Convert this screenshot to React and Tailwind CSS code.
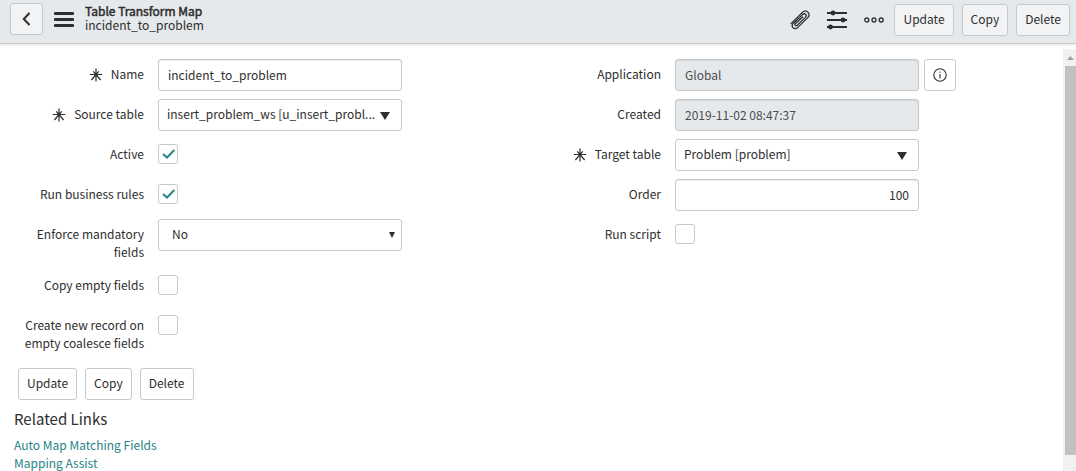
import { useState } from 'react'

const buttonBase = 'h-8 rounded-[3px] border border-[#c6c9cc] px-2 pb-0.5 text-[12px] leading-[18px] hover:bg-gray-100'
const fieldBase = 'block h-8 w-full rounded-[3px] border border-[#c6c9cc] px-[9px] pb-0.5 text-[12px] leading-[18px] outline-none focus:border-[#278485]'

function RecordActions({ className }) {
  return (
    <>
      <button type="button" className={`${buttonBase} ${className}`}>Update</button>
      <button type="button" className={`${buttonBase} ${className}`}>Copy</button>
      <button type="button" className={`${buttonBase} ${className}`}>Delete</button>
    </>
  )
}

function PaperclipIcon() {
  return (
    <svg className="h-5 w-5" viewBox="0 0 20 20" fill="none" stroke="currentColor" strokeWidth="1.3" strokeLinecap="round" strokeLinejoin="round">
      <path d="M1 13.6 L12.4 2.4 C14.4 0.6 16.6 0.7 18 2.2 C19.6 3.8 19.4 6 17.8 7.6 L7.8 17.4 C6 19 4 18.9 2.9 17.6 C1.8 16.3 2 14.6 3.4 13.2 L12.6 4.6 C13.8 3.6 15 3.6 15.8 4.4 C16.6 5.3 16.4 6.4 15.4 7.4 L7.2 15.2 C6.4 15.9 5.6 15.8 5.2 15.3 C4.8 14.8 4.9 14.1 5.5 13.5 L12.6 7" />
    </svg>
  )
}

function SettingsIcon() {
  return (
    <svg className="h-5 w-5" viewBox="0 0 20 20" fill="currentColor">
      <rect x="0" y="2" width="20" height="2" />
      <rect x="0" y="9" width="20" height="2" />
      <rect x="0" y="16" width="20" height="2" />
      <circle cx="6" cy="3" r="2.4" />
      <circle cx="16" cy="10" r="2.4" />
      <circle cx="3.5" cy="17" r="2.4" />
    </svg>
  )
}

function RequiredIcon() {
  return (
    <svg className="mt-[3px] h-3.5 w-3.5 shrink-0" viewBox="0 0 14 14" fill="none" stroke="currentColor" strokeWidth="1.2" aria-label="Mandatory">
      <path d="M7 0.5 V13.5 M0.8 6.5 H13.2 M2.4 12 L7 6.5 L11.6 12 M4.2 3.4 L7 6.5 L9.8 3.4" />
    </svg>
  )
}

// Label, control and an optional trailing action
function FormRow({ id, label, required, action, children }) {
  return (
    <div className="mb-2 grid min-h-8 grid-cols-[158fr_244fr_115fr]">
      <label htmlFor={id} className="flex justify-end gap-2 pt-1.5 pr-3.5 pb-px pl-5 text-right text-[12px] leading-[18px]">
        {required && <RequiredIcon />}
        <span>{label}</span>
      </label>
      <div>{children}</div>
      <div className="pl-[5px]">{action}</div>
    </div>
  )
}

function TextField({ id, value, readOnly, alignRight }) {
  const [text, setText] = useState(value)
  const look = readOnly ? 'bg-[#e6e9eb] text-[#4a4d50]' : 'bg-white'
  return (
    <input
      id={id}
      type="text"
      value={text}
      readOnly={readOnly}
      onChange={(e) => setText(e.target.value)}
      className={`${fieldBase} ${look} shadow-[inset_0_1px_1px_rgba(0,0,0,0.08)] ${alignRight ? 'text-right' : ''}`}
    />
  )
}

function SelectField({ id, options, small }) {
  return (
    <div className="relative">
      <select id={id} className={`${fieldBase} appearance-none bg-white ${small ? 'pl-[13px]' : 'pl-2'}`}>
        {options.map((option) => (
          <option key={option}>{option}</option>
        ))}
      </select>
      {small ? (
        <svg className="pointer-events-none absolute top-[13px] right-[7px] h-1.5 w-1.5" viewBox="0 0 6 6" fill="currentColor">
          <path d="M0 0 H6 L3 6 Z" />
        </svg>
      ) : (
        <svg className="pointer-events-none absolute top-[13px] right-3 h-2 w-2.5" viewBox="0 0 10 8" fill="currentColor">
          <path d="M0 0 H10 L5 8 Z" />
        </svg>
      )}
    </div>
  )
}

function CheckField({ id, defaultChecked = false }) {
  const [checked, setChecked] = useState(defaultChecked)
  return (
    <div className="relative pt-[5px]">
      <input
        id={id}
        type="checkbox"
        checked={checked}
        onChange={(e) => setChecked(e.target.checked)}
        className="block h-5 w-5 appearance-none rounded-[3px] border border-[#c6c9cc] bg-white"
      />
      {checked && (
        <svg className="pointer-events-none absolute top-[5px] left-0 h-5 w-5 text-[#278485]" viewBox="0 0 20 20" fill="none" stroke="currentColor" strokeWidth="2">
          <path d="M5 10 L9 13.5 L16.3 6" />
        </svg>
      )}
    </div>
  )
}

export default function App() {
  return (
    <div className="flex h-screen flex-col overflow-hidden bg-white font-['Noto_Sans_CJK_SC',sans-serif] text-[#2e2e2e]">
      <header className="flex h-11 shrink-0 items-start border-b border-[#c9cccf] bg-[#e6e9eb] pr-1.5 pl-2.5 shadow-[0_1px_2px_rgba(0,0,0,0.12)]">
        <button type="button" aria-label="Back" className="mt-[3px] flex h-8 w-[33px] items-center justify-center rounded-[3px] border border-[#c6c9cc] bg-[#f2f3f5]">
          <svg className="h-3.5 w-3.5" viewBox="0 0 14 14" fill="none" stroke="currentColor" strokeWidth="2">
            <path d="M9.5 1 L3.8 7 L9.5 13" />
          </svg>
        </button>
        <button type="button" aria-label="Additional actions" className="mt-3 ml-[11px]">
          <svg className="h-4 w-5" viewBox="0 0 20 16" fill="currentColor">
            <rect x="0" y="0" width="20" height="3" rx="1" />
            <rect x="0" y="6" width="20" height="3" rx="1" />
            <rect x="0" y="12" width="20" height="3" rx="1" />
          </svg>
        </button>
        <h1 className="mt-1 ml-[11px] flex-1 text-[12px] leading-[14px]">
          <span className="block [-webkit-text-stroke:0.5px]">Table Transform Map</span>
          <span className="block">incident_to_problem</span>
        </h1>
        <div className="mt-1 flex items-center gap-2">
          <div className="flex items-center gap-[17px] pr-0.5">
            <button type="button" aria-label="Manage attachments"><PaperclipIcon /></button>
            <button type="button" aria-label="Personalize form"><SettingsIcon /></button>
            <button type="button" aria-label="More options">
              <svg className="h-5 w-5" viewBox="0 0 20 20" fill="none" stroke="currentColor" strokeWidth="1.3">
                <circle cx="2.8" cy="10" r="2" />
                <circle cx="10" cy="10" r="2" />
                <circle cx="17.2" cy="10" r="2" />
              </svg>
            </button>
          </div>
          <RecordActions className="bg-[#f2f3f5]" />
        </div>
      </header>

      <div className="flex min-h-0 flex-1">
        <main className="flex-1 overflow-hidden pt-[15px]">
          <form onSubmit={(e) => e.preventDefault()}>
            <div className="grid grid-cols-2 pr-[29px]">
              <div>
                <FormRow id="name" label="Name" required>
                  <TextField id="name" value="incident_to_problem" />
                </FormRow>
                <FormRow id="source" label="Source table" required>
                  <SelectField id="source" options={['insert_problem_ws [u_insert_probl...']} />
                </FormRow>
                <FormRow id="active" label="Active">
                  <CheckField id="active" defaultChecked />
                </FormRow>
                <FormRow id="rules" label="Run business rules">
                  <CheckField id="rules" defaultChecked />
                </FormRow>
                <FormRow id="enforce" label="Enforce mandatory fields">
                  <SelectField id="enforce" options={['No']} small />
                </FormRow>
                <FormRow id="copy-empty" label="Copy empty fields">
                  <CheckField id="copy-empty" />
                </FormRow>
                <FormRow id="create-new" label="Create new record on empty coalesce fields">
                  <CheckField id="create-new" />
                </FormRow>
              </div>
              <div>
                <FormRow
                  id="application"
                  label="Application"
                  action={
                    <button type="button" aria-label="Application details" className="flex h-8 w-8 items-center justify-center rounded-[3px] border border-[#c6c9cc]">
                      <svg className="h-3.5 w-3.5" viewBox="0 0 14 14" fill="none" stroke="currentColor" strokeWidth="1.1">
                        <circle cx="7" cy="7" r="6.2" />
                        <path d="M7 6 V10.6 M7 3.4 V4.7" />
                      </svg>
                    </button>
                  }
                >
                  <TextField id="application" value="Global" readOnly />
                </FormRow>
                <FormRow id="created" label="Created">
                  <TextField id="created" value="2019-11-02 08:47:37" readOnly />
                </FormRow>
                <FormRow id="target" label="Target table" required>
                  <SelectField id="target" options={['Problem [problem]']} />
                </FormRow>
                <FormRow id="order" label="Order">
                  <TextField id="order" value="100" alignRight />
                </FormRow>
                <FormRow id="run-script" label="Run script">
                  <CheckField id="run-script" />
                </FormRow>
              </div>
            </div>
            <div className="mt-[7px] flex gap-2 pl-[18px]">
              <RecordActions className="bg-white" />
            </div>
          </form>

          <section className="px-3.5 pt-2">
            <h2 className="text-[15px] leading-[22px]">Related Links</h2>
            <ul className="mt-1.5 text-[12px] leading-[18px] text-[#278485]">
              <li><a href="#auto-map" className="hover:underline">Auto Map Matching Fields</a></li>
              <li><a href="#mapping-assist" className="hover:underline">Mapping Assist</a></li>
            </ul>
          </section>
        </main>

        {/* Scrollbar */}
        <div className="mt-[5px] flex w-[13px] shrink-0 flex-col bg-[#f1f1f1] pb-4 pl-0.5" aria-hidden="true">
          <div className="flex h-[17px] items-center justify-center">
            <svg className="h-1 w-[7px] text-[#a3a3a3]" viewBox="0 0 7 4" fill="currentColor">
              <path d="M0 4 L3.5 0 L7 4 Z" />
            </svg>
          </div>
          <div className="flex-1 bg-[#c1c1c1]" />
        </div>
      </div>
    </div>
  )
}
